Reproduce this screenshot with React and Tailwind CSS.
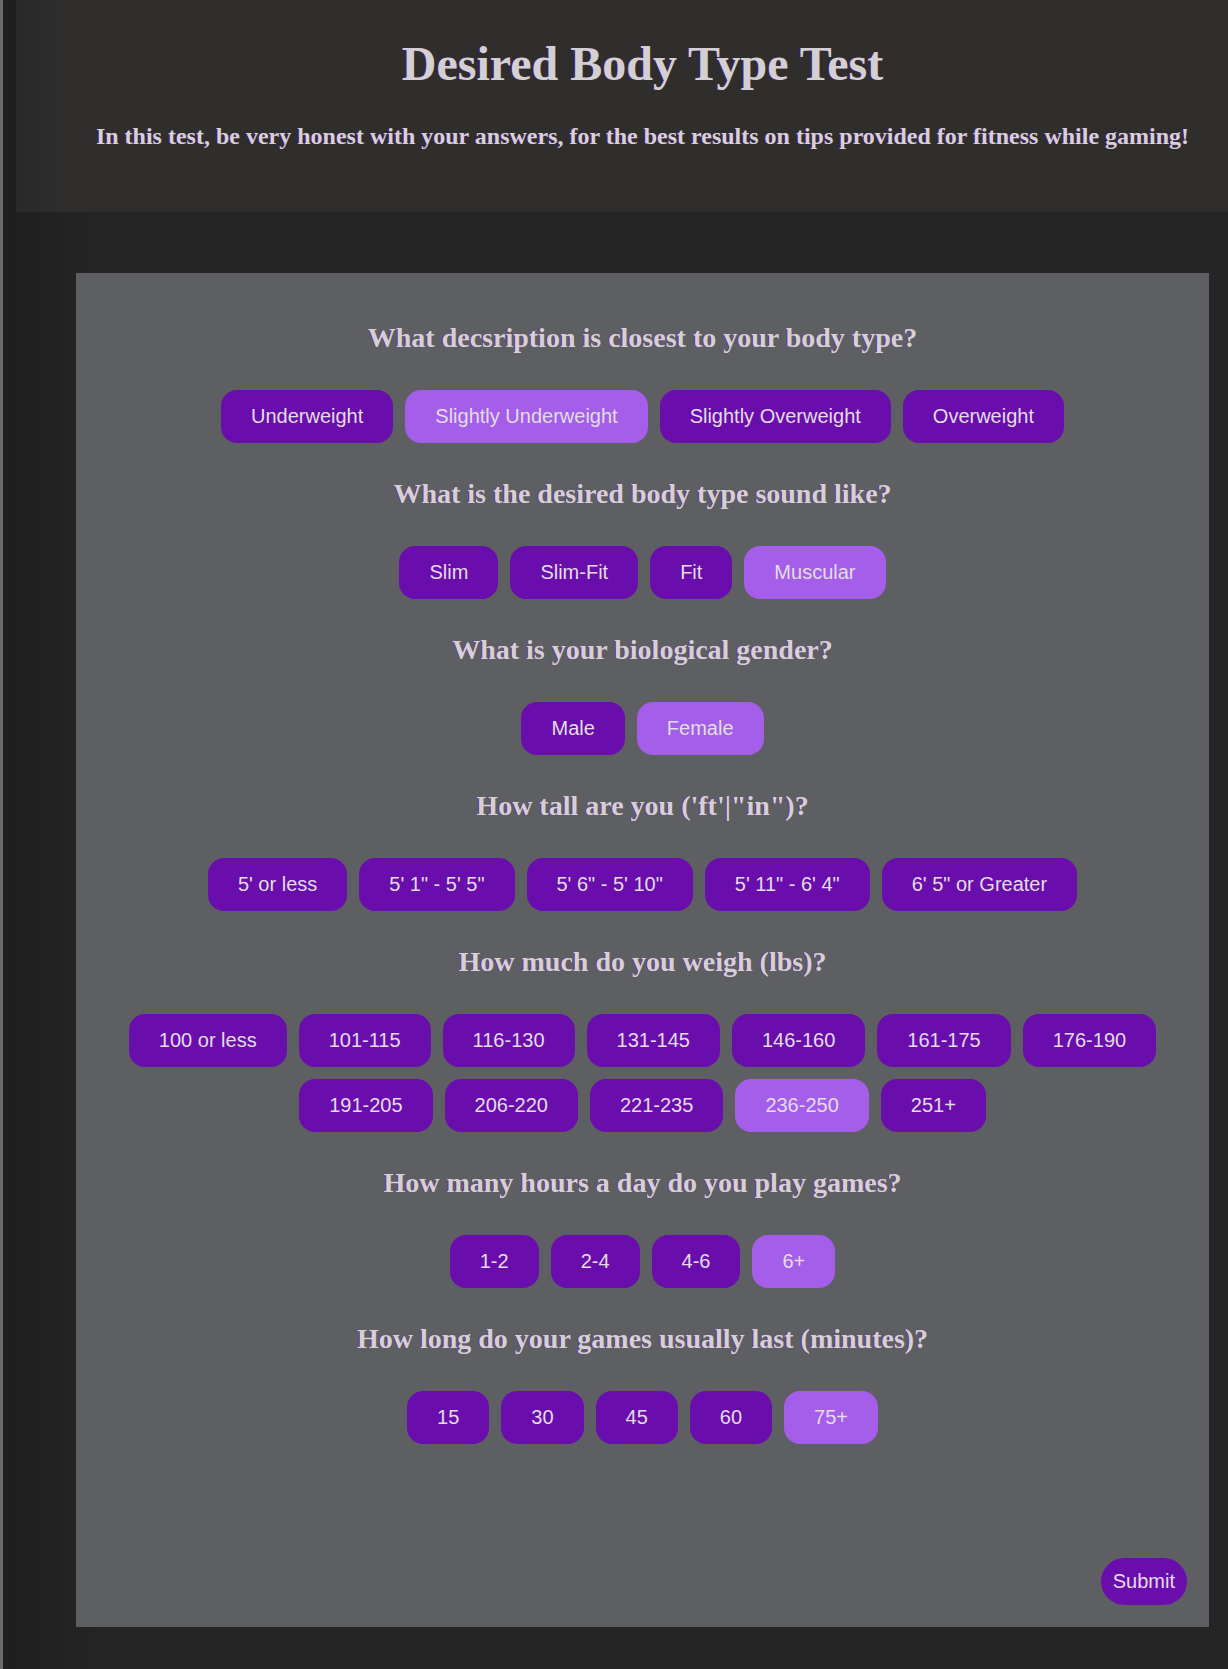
import React, { useState } from "react";

const questions = [
  {
    id: "bodyType",
    text: "What decsription is closest to your body type?",
    options: ["Underweight", "Slightly Underweight", "Slightly Overweight", "Overweight"],
    picked: "Slightly Underweight",
  },
  {
    id: "desired",
    text: "What is the desired body type sound like?",
    options: ["Slim", "Slim-Fit", "Fit", "Muscular"],
    picked: "Muscular",
  },
  {
    id: "gender",
    text: "What is your biological gender?",
    options: ["Male", "Female"],
    picked: "Female",
  },
  {
    id: "height",
    text: "How tall are you ('ft'|\"in\")?",
    options: ["5' or less", "5' 1\" - 5' 5\"", "5' 6\" - 5' 10\"", "5' 11\" - 6' 4\"", "6' 5\" or Greater"],
    picked: null,
  },
  {
    id: "weight",
    text: "How much do you weigh (lbs)?",
    options: [
      "100 or less",
      "101-115",
      "116-130",
      "131-145",
      "146-160",
      "161-175",
      "176-190",
      "191-205",
      "206-220",
      "221-235",
      "236-250",
      "251+",
    ],
    picked: "236-250",
  },
  {
    id: "hours",
    text: "How many hours a day do you play games?",
    options: ["1-2", "2-4", "4-6", "6+"],
    picked: "6+",
  },
  {
    id: "minutes",
    text: "How long do your games usually last (minutes)?",
    options: ["15", "30", "45", "60", "75+"],
    picked: "75+",
  },
];

const serif = "font-['Liberation_Serif','Times_New_Roman',serif]";
const sans = "font-['Liberation_Sans',Arial,sans-serif]";

export default function App() {
  const [answers, setAnswers] = useState(
    Object.fromEntries(questions.map((q) => [q.id, q.picked]))
  );

  const pick = (id, value) => {
    setAnswers({ ...answers, [id]: value });
  };

  return (
    <div className="flex min-h-[1669px] w-full overflow-hidden bg-[#262526]">
      {/* left edge strip */}
      <div className="w-[3px] shrink-0 bg-[#6b6b6b]"></div>
      <div className="w-[13px] shrink-0 bg-[#1f1f1f]"></div>

      <div className="w-[1253px] shrink-0">
        <header className="h-[212px] bg-[linear-gradient(to_right,#2a2929,#2f2e2d_50px)] pt-[36px] text-center">
          <h1
            className={`${serif} text-[48px] leading-[56px] font-bold text-[#d3d0d3] [text-shadow:-1px_0_0_rgba(106,13,173,0.55)]`}
          >
            Desired Body Type Test
          </h1>
          <p
            className={`${serif} mt-[30px] text-[24px] leading-[28px] font-bold text-[#d6d0d8] [text-shadow:-1px_0_0_rgba(106,13,173,0.55)]`}
          >
            In this test, be very honest with your answers, for the best results on tips provided for fitness while gaming!
          </p>
        </header>

        <main className="bg-[linear-gradient(to_right,#1f1f1f,#262526_80px)] pt-[61px] pb-[42px]">
          <div className="mx-[60px] bg-[#5e5f63] pt-[49px] pb-[22px]">
            <div className="flex flex-col gap-[35px]">
              {questions.map((q) => (
                <section key={q.id} className="flex flex-col items-center">
                  <h2
                    className={`${serif} text-center text-[28px] leading-[32px] font-bold text-[#d6d0d6] [text-shadow:-1px_0_0_rgba(106,13,173,0.5)]`}
                  >
                    {q.text}
                  </h2>
                  <div className="mt-[36px] flex flex-wrap justify-center gap-[12px]">
                    {q.options.map((opt) => (
                      <button
                        key={opt}
                        onClick={() => pick(q.id, opt)}
                        className={`${sans} h-[53px] rounded-[16px] px-[30px] text-[20px] leading-[23px] text-[#e2dde6] ${
                          answers[q.id] === opt ? "bg-[#a55eea]" : "bg-[#6a0dad]"
                        }`}
                      >
                        {opt}
                      </button>
                    ))}
                  </div>
                </section>
              ))}
            </div>

            <div className="mt-[114px] flex justify-end pr-[22px]">
              <button
                className={`${sans} h-[47px] rounded-full bg-[#6a0dad] px-[12px] text-[20px] leading-[23px] text-[#e2dde6]`}
              >
                Submit
              </button>
            </div>
          </div>
        </main>
      </div>
    </div>
  );
}
